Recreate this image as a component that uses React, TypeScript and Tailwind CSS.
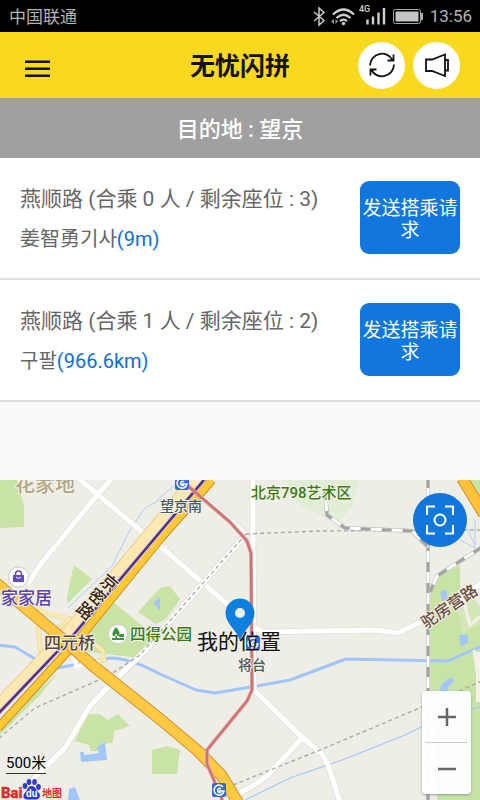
import type { ReactNode } from "react";

type Ride = { place: string; aboard: number; seats: number; driver: string; distance: string };

const rides: Ride[] = [
  { place: "燕顺路", aboard: 0, seats: 3, driver: "姜智勇기사", distance: "9m" },
  { place: "燕顺路", aboard: 1, seats: 2, driver: "구팔", distance: "966.6km" },
];

function StatusBar() {
  return (
    <div className="flex h-8 items-center justify-between bg-black pl-[9px] pr-2 text-[17px] text-[#b4b4b4]">
      <span className="pt-1">中国联通</span>
      <div className="flex items-center">
        <svg width="120" height="32" viewBox="310 0 120 32" fill="none" aria-hidden="true">
          <path d="M314 12l10 8.500l-5 4.500v-17l5 4.500l-10 8.500" stroke="#c8c8c8" strokeWidth="1.500" />
          <g stroke="#d0d0d0" strokeWidth="2.200">
            <path d="M333 14.500q10.500-10 21 0" />
            <path d="M336.500 18q7-6.500 14 0" />
            <path d="M340 21.200q3.500-3 7 0" />
          </g>
          <circle cx="343.500" cy="23.500" r="1.700" fill="#d0d0d0" />
          <path d="M334 19v5l-3-2.500zM335.500 19v5l2.500-2.500z" fill="#999" />
          <text x="359" y="12" fontSize="9" fontWeight="500" fill="#d0d0d0">4G</text>
          <path d="M367.500 24.500v-5M373 24.500v-8M378.500 24.500v-12M384 24.500V8" stroke="#d0d0d0" strokeWidth="2.400" />
          <rect x="393.500" y="9.500" width="27" height="14" rx="2" stroke="#aaa" />
          <rect x="395.500" y="11.500" width="23" height="10" fill="#c4c4c4" />
          <path d="M422 13v7" stroke="#aaa" strokeWidth="2" />
        </svg>
        <span className="pt-0.5">13:56</span>
      </div>
    </div>
  );
}

function RoundButton({ label, children }: { label: string; children: ReactNode }) {
  return (
    <button aria-label={label} className="flex size-[47px] items-center justify-center rounded-full bg-white">
      <svg width="30" height="30" viewBox="0 0 30 30" fill="none" stroke="#111" strokeWidth="1.800" aria-hidden="true">
        {children}
      </svg>
    </button>
  );
}

function Header() {
  return (
    <header className="grid h-[66px] grid-cols-[1fr_auto_1fr] items-center bg-[#f9d820] px-5">
      <button aria-label="菜单" className="ml-[5px] mt-2 w-[25px]">
        <svg className="block" width="25" height="18" viewBox="0 0 25 18" stroke="#111" strokeWidth="2.400" aria-hidden="true">
          <path d="M0 1.800h25M0 8.800h25M0 15.800h25" />
        </svg>
      </button>
      <h1 className="pt-1 text-[25px] font-bold leading-8 text-[#111]">无忧闪拼</h1>
      <div className="flex justify-end gap-2">
        <RoundButton label="刷新">
          <path d="M3 15.500A12 12 0 0 1 25.800 10.500M27 14.500A12 12 0 0 1 4.200 19.500M26.500 4.500v6h-6M3.500 25.500v-6h6" />
        </RoundButton>
        <RoundButton label="公告">
          <path d="M4 9.500h6L23 4.500v21.500L10 21H4zM23 10h3v10.500h-3" />
        </RoundButton>
      </div>
    </header>
  );
}

function RideRow({ ride }: { ride: Ride }) {
  return (
    <li className="flex items-start justify-between border-b-2 border-[#dedede] bg-white px-5 pb-[23px] pt-[23px]">
      <div className="text-[#666]">
        <p className="pt-0.5 text-[21px] leading-8">
          {ride.place} (合乘 {ride.aboard} 人 / 剩余座位 : {ride.seats})
        </p>
        <p className="mt-2 text-[20px] leading-8">
          {ride.driver}
          <span className="text-[#0d6fd6]">({ride.distance})</span>
        </p>
      </div>
      <button className="h-[73px] w-[100px] shrink-0 rounded-[9px] bg-[#1177dd] px-0.5 pt-1 text-[19px] leading-[22px] text-white">
        发送搭乘请求
      </button>
    </li>
  );
}

function MetroSign({ x, y }: { x: number; y: number }) {
  return (
    <g transform={`translate(${x} ${y})`}>
      <rect x="-7" y="-7" width="14" height="14" rx="2" fill="#3468d8" />
      <path d="M4-3A5 5 0 1 0 5 1H0M2-1a2 2 0 1 0 0 3" fill="none" stroke="#fff" strokeWidth="1.500" />
    </g>
  );
}

function Rail({ d }: { d: string }) {
  return (
    <g fill="none">
      <path d={d} stroke="#b0b0b0" strokeWidth="4" />
      <path d={d} stroke="#fff" strokeWidth="3" />
      <path d={d} stroke="#a2a2a2" strokeWidth="3" strokeDasharray="10 11" />
    </g>
  );
}

const streets =
  "M112 478L97 495L40 565L28 584M78 478L97 494L147 536M203 498L246 534M253 478V540L254 690L302 737L322 754L328 765L340 802M302 738L268 775Q252 788 233 796M160 546L255 628L262 632L375 630L398 633L425 620M460 600L482 582M160 636L110 685L90 706L65 748L30 782";
const parkPaths = "M463 600L470 625L482 615M474 650L480 690";
const expressway = "M212 480L160 539L78 640L-2 728";
const serviceRoad = "M194 480L152 531L70 630L-2 706";
const metroUnderExpressway = "M204 480L160 532L75 633L-2 714";
const ringRoad = "M-4 583L65 641L92 665L160 719L198 751L222 776L240 806";
const metroLine = "M188 486L230 522L247 541L251 553L252 690L247 701L207 750V764L216 785L223 802";

function MapCanvas() {
  return (
    <svg className="block h-full w-full" viewBox="0 480 480 320" preserveAspectRatio="xMidYMid slice" role="img" aria-label="地图">
      <rect y="480" width="480" height="320" fill="#eeeee6" />
      <g fill="#c9e3a7">
        <path d="M0 480h17l7 26v21L0 528z" />
        <path d="M74 565l18 14l-25 25v-6l3-16z" />
        <path d="M108 598L160 640L140 658L88 652L80 638z" />
        <path d="M138 612L160 588L170 586L180 599L166 619L156 624z" />
        <path d="M87 714h13l8 6l10-6l12 12l-16 5l-1 12l-12 1l-4 7h-6l-2-6l-14-4z" />
        <path d="M152 750l15-4l13 4l-3 24h-25z" />
        <path d="M58 673L50 680L0 724V735L40 695z" />
        <path d="M430 595L440 576L460 565V600L480 618V800H437V720H430z" />
        <path d="M467 480h13v22z" />
      </g>
      <path d="M286 480h73l-6 25l-15 18l-40-18z" fill="#e2edd5" />
      <path d="M455 600l12-9l13 15v18l-17 9z" fill="#d3e7b8" />
      <path d="M476 652h4v50h-4z" fill="#f5f3e9" />
      <g fill="#a3c6f9">
        <path d="M80 752h4v3l15-2l-2-6l8-5l2 18l-26 2z" />
        <path d="M69 789l6-2l5 13H68z" />
        <path d="M440 592l6-3l2 10l-6 2z" />
        <path d="M440 690q0-8 13-13q3 5-5 10v6h-8z" />
        <path d="M459 635h9v8l-7 4z" />
        <path d="M153 603l7-6v14z" />
      </g>
      <g fill="none" stroke="#a1c5fa" strokeLinejoin="round">
        <path d="M-2 645L15 647L52 669L110 658Q130 658 160 674L196 690L215 693L251 687L290 680L346 659L448 661L482 646" strokeWidth="3" />
        <path d="M245 800L290 778L345 759L405 735L440 718L482 706" strokeWidth="1.200" />
        <path d="M162 499L145 508L130 530L112 566L68 608M181 480l-24 20M444 493l10 20M460 515l15 30M475 520v28l-15-8" strokeWidth="0.800" />
      </g>
      <g fill="none" strokeLinejoin="round">
        <path d={streets} stroke="#dfded8" strokeWidth="6.500" />
        <path d={streets} stroke="#fff" strokeWidth="5" />
        <path d={parkPaths} stroke="#f1f0e6" strokeWidth="3.500" />
        <path d="M246 534L150 644" stroke="#dfded8" strokeWidth="6.500" />
        <path d="M246 534L150 644" stroke="#fff" strokeWidth="5" />
        <path d="M246 534L140 655L108 676L35 708L-2 739M246 534L320 531L482 530M233 785L320 750L422 707L482 681" stroke="#aaa" strokeWidth="1.400" strokeDasharray="4 3" />
        <path d="M37 610Q65 620 85 620M46 642Q60 620 78 620M40 600Q36 630 42 660M84 636l18 14l2 10l-20 4l-8-10" stroke="#e3d39c" strokeWidth="5" />
        <path d="M37 610Q65 620 85 620M46 642Q60 620 78 620M40 600Q36 630 42 660M84 636l18 14l2 10l-20 4l-8-10" stroke="#fae8b4" strokeWidth="4" />
        <path d="M74 656l2 10l24-4" stroke="#fff" strokeWidth="4" />
        <path d={serviceRoad} stroke="#e3d39c" strokeWidth="13" />
        <path d={serviceRoad} stroke="#fce9b2" strokeWidth="11" />
        <path d={expressway} stroke="#c98d2a" strokeWidth="9" />
        <path d={expressway} stroke="#ffc835" strokeWidth="7" />
        <path d={metroUnderExpressway} stroke="#d9cbe0" strokeWidth="4.500" />
        <path d={metroUnderExpressway} stroke="#53307c" strokeWidth="2.500" />
        <path d={ringRoad} stroke="#cf932f" strokeWidth="12" />
        <path d={ringRoad} stroke="#ffc944" strokeWidth="10" />
        <path d="M462 478L484 514" stroke="#cf932f" strokeWidth="12" />
        <path d="M462 478L484 514" stroke="#ffc23a" strokeWidth="10" />
        <path d={metroLine} stroke="#e3b5b0" strokeWidth="4" />
        <path d={metroLine} stroke="#cf7273" strokeWidth="2.500" />
      </g>
      <Rail d="M428 478V802" />
      <Rail d="M325 490L327 515L345 528L412 531L428 547" />
      <Rail d="M482 547L437 576L430 592" />
      <MetroSign x={182} y={483} />
      <MetroSign x={253} y={643} />
      <MetroSign x={219} y={790} />
      <circle cx="18.500" cy="577" r="10" fill="#fff" stroke="#ccc" />
      <path d="M13 575h11v7H13z" fill="#6348c0" />
      <path d="M15.500 575v-1a3 3 0 0 1 6 0v1" fill="none" stroke="#6348c0" strokeWidth="1.500" />
      <path d="M16 577q2.500 3 5 0" fill="none" stroke="#fff" />
      <circle cx="118" cy="634" r="9.500" fill="#fff" stroke="#ccc" />
      <path d="M116 627q-5 5-3 9h6q2-4-3-9zM115.500 634h1.500v5h-1.500zM112 638h12v2h-12zM119 634h5v3h-5z" fill="#3f9440" />
      <g stroke="#f4f3ea" strokeWidth="2" strokeLinejoin="round" paintOrder="stroke" fontWeight="500">
        <text x="15" y="492" fontSize="20" fill="#b3a583">花家地</text>
        <text x="160" y="511" fontSize="14" fill="#46595f">望京南</text>
        <text x="251" y="498" fontSize="15" fill="#3c7a12">北京798艺术区</text>
        <text x="-16" y="604" fontSize="17" fill="#5b40ae">宜家家居</text>
        <text x="44" y="649" fontSize="17" fill="#574539">四元桥</text>
        <text x="130" y="640" fontSize="15.500" fill="#3c7a12">四得公园</text>
        <text x="238" y="670" fontSize="14" fill="#46595f">将台</text>
        <text transform="translate(426 629) rotate(-34)" fontSize="16" fill="#6b4b3d">驼房营路</text>
        <g fontSize="17" fill="#37240f" textAnchor="middle">
          <text transform="translate(109 583) rotate(40)" y="6">京</text>
          <text transform="translate(97 597) rotate(40)" y="6">密</text>
          <text transform="translate(85 611) rotate(40)" y="6">路</text>
        </g>
      </g>
      <path d="M240 641C237 630 225.500 624 225.500 613a14.500 14.500 0 0 1 29 0C254.500 624 243 630 240 641z" fill="#0d7fde" />
      <circle cx="240" cy="613" r="5" fill="#eee" />
      <text x="197" y="649" fontSize="21" fill="#111">我的位置</text>
    </svg>
  );
}

function BaiduMark() {
  return (
    <svg className="block" width="64" height="24" viewBox="0 0 64 24" aria-label="Baidu 地图" role="img">
      <text x="1" y="22" fontSize="15" fontWeight="700" fill="#de2b2b" stroke="#de2b2b" strokeWidth="0.500">Bai</text>
      <g fill="#2c39d4">
        <ellipse cx="25" cy="10" rx="2.300" ry="3" />
        <ellipse cx="29" cy="6" rx="2.300" ry="3" />
        <ellipse cx="34.500" cy="6" rx="2.300" ry="3" />
        <ellipse cx="38.500" cy="11" rx="2.300" ry="3" />
        <path d="M31.500 10c4 0 4 3.500 7 6.500s1 7.500-3 7h-8c-5 0-5-4.500-2-7.500s2-6 6-6z" />
      </g>
      <text x="26" y="21" fontSize="10" fontWeight="700" fill="#fff">du</text>
      <text x="42" y="21" fontSize="10" fontWeight="700" fill="#de2b2b">地图</text>
    </svg>
  );
}

function MapPanel() {
  return (
    <section className="relative h-80 overflow-hidden bg-[#eeeee6]">
      <MapCanvas />
      <button aria-label="定位" className="absolute right-[13px] top-[13px] flex size-[54px] items-center justify-center rounded-full bg-[#1177dd]">
        <svg width="30" height="30" viewBox="0 0 30 30" fill="none" stroke="#fff" strokeWidth="2" aria-hidden="true">
          <path d="M10 1.500H2V10M20 1.500h8V10M10 28.500H2V20M20 28.500h8V20" />
          <circle cx="15" cy="15" r="5.500" />
        </svg>
      </button>
      <div className="absolute bottom-1.5 right-[9px] flex w-[49px] flex-col items-center rounded-sm bg-white/95 shadow-sm shadow-gray-500/50">
        <button aria-label="放大" className="flex h-[51px] w-full items-center justify-center">
          <svg width="18" height="18" viewBox="0 0 18 18" stroke="#666" strokeWidth="2.500" aria-hidden="true">
            <path d="M0 9h18M9 0v18" />
          </svg>
        </button>
        <div className="h-px w-[43px] bg-[#ccc]" />
        <button aria-label="缩小" className="flex h-[51px] w-full items-center justify-center">
          <svg width="18" height="18" viewBox="0 0 18 18" stroke="#666" strokeWidth="2.500" aria-hidden="true">
            <path d="M0 9h18" />
          </svg>
        </button>
      </div>
      <div className="absolute bottom-[26px] left-1.5 border-b border-[#333] text-[15px] leading-5 text-black">500米</div>
      <div className="absolute bottom-0 left-0">
        <BaiduMark />
      </div>
    </section>
  );
}

export default function App() {
  return (
    <div className="flex min-h-screen flex-col bg-[#fafafa] font-['Roboto','Noto_Sans_CJK_SC','Noto_Sans_CJK_KR',sans-serif]">
      <StatusBar />
      <Header />
      <h2 className="flex h-[60px] items-center justify-center bg-[#a0a0a0] pt-0.5 text-[22px] font-medium text-white">
        目的地 : 望京
      </h2>
      <ul className="grow pb-[78px]">
        {rides.map((ride) => (
          <RideRow key={ride.driver} ride={ride} />
        ))}
      </ul>
      <MapPanel />
    </div>
  );
}
